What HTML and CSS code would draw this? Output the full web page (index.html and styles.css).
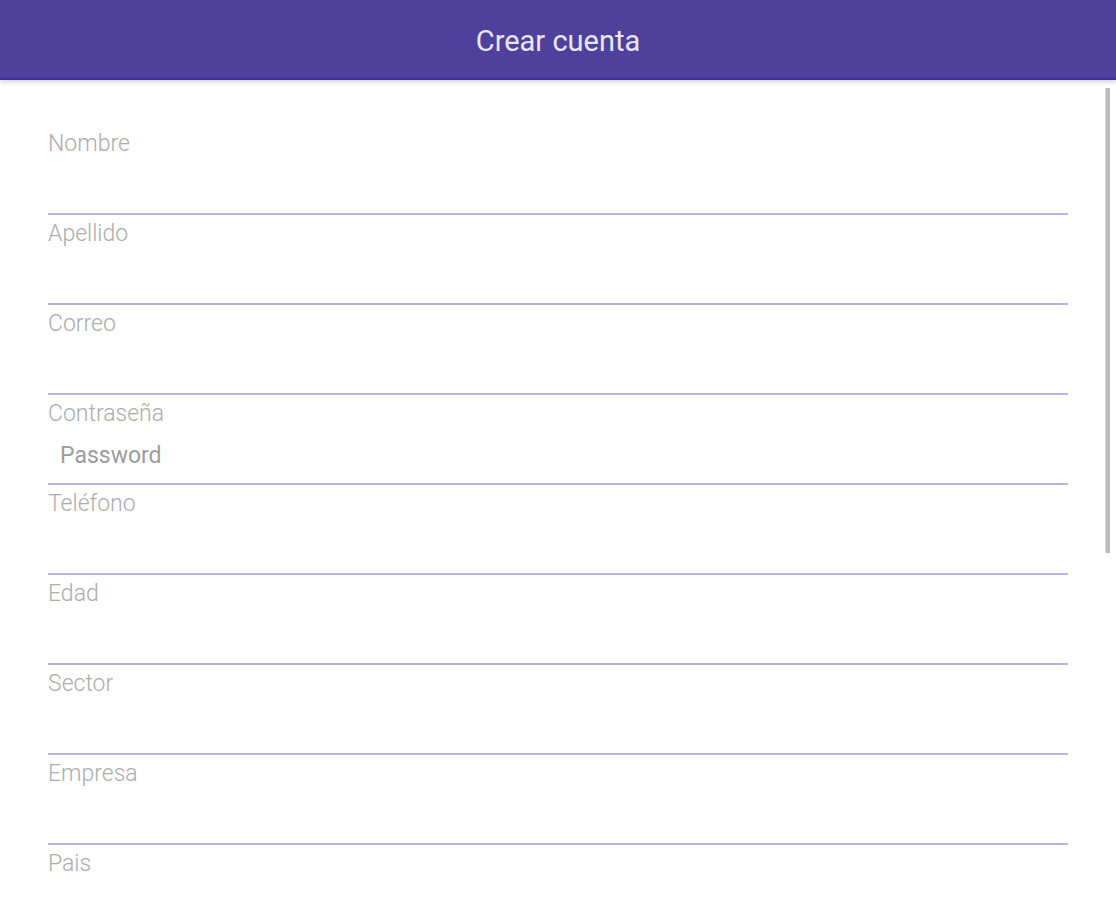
FILE: index.html
```html
<!DOCTYPE html>
<html lang="es">
<head>
<meta charset="utf-8">
<title>Crear cuenta</title>
<link rel="stylesheet" href="styles.css">
</head>
<body>
<header class="topbar">
  <h1 class="topbar-title">Crear cuenta</h1>
</header>
<main class="form">
  <div class="field"><label class="field-label">Nombre</label><div class="field-input"></div></div>
  <div class="field"><label class="field-label">Apellido</label><div class="field-input"></div></div>
  <div class="field"><label class="field-label">Correo</label><div class="field-input"></div></div>
  <div class="field"><label class="field-label">Contraseña</label><div class="field-input"><span class="placeholder">Password</span></div></div>
  <div class="field"><label class="field-label">Teléfono</label><div class="field-input"></div></div>
  <div class="field"><label class="field-label">Edad</label><div class="field-input"></div></div>
  <div class="field"><label class="field-label">Sector</label><div class="field-input"></div></div>
  <div class="field"><label class="field-label">Empresa</label><div class="field-input"></div></div>
  <div class="field"><label class="field-label">Pais</label><div class="field-input"></div></div>
</main>
<div class="scroll-thumb"></div>
</body>
</html>
```
FILE: styles.css
```css
html, body {
  margin: 0;
  padding: 0;
  height: 100%;
  overflow: hidden;
  background: #ffffff;
  font-family: Roboto, "Noto Sans", "Liberation Sans", sans-serif;
}

.topbar {
  height: 78px;
  background: #4f409c;
  border-bottom: 2px solid #3d2f98;
  box-shadow: 0 2px 5px rgba(0, 0, 0, 0.18);
  display: flex;
  align-items: center;
  justify-content: center;
  position: relative;
  z-index: 2;
}

.topbar-title {
  margin: 0;
  margin-top: 3px;
  font-size: 29px;
  font-weight: 400;
  color: #e9e6f6;
  letter-spacing: 0;
}

.form {
  padding: 45px 48px 0 48px;
  display: flex;
  flex-direction: column;
}

.field {
  height: 90px;
  display: flex;
  flex-direction: column;
}

.field-label {
  display: block;
  height: 36px;
  line-height: 38px;
  font-size: 23px;
  color: #acacac;
  font-weight: 300;
}

.field-input {
  height: 52px;
  line-height: 50px;
  border-bottom: 2px solid #bab2e5;
  padding-left: 12px;
}

.placeholder {
  font-size: 23px;
  color: #9c9c9c;
}

.scroll-thumb {
  position: absolute;
  left: 1105px;
  top: 88px;
  width: 5px;
  height: 465px;
  background: #bdbdbd;
  border-left: 1px solid #dcdcdc;
  box-sizing: border-box;
}
```
